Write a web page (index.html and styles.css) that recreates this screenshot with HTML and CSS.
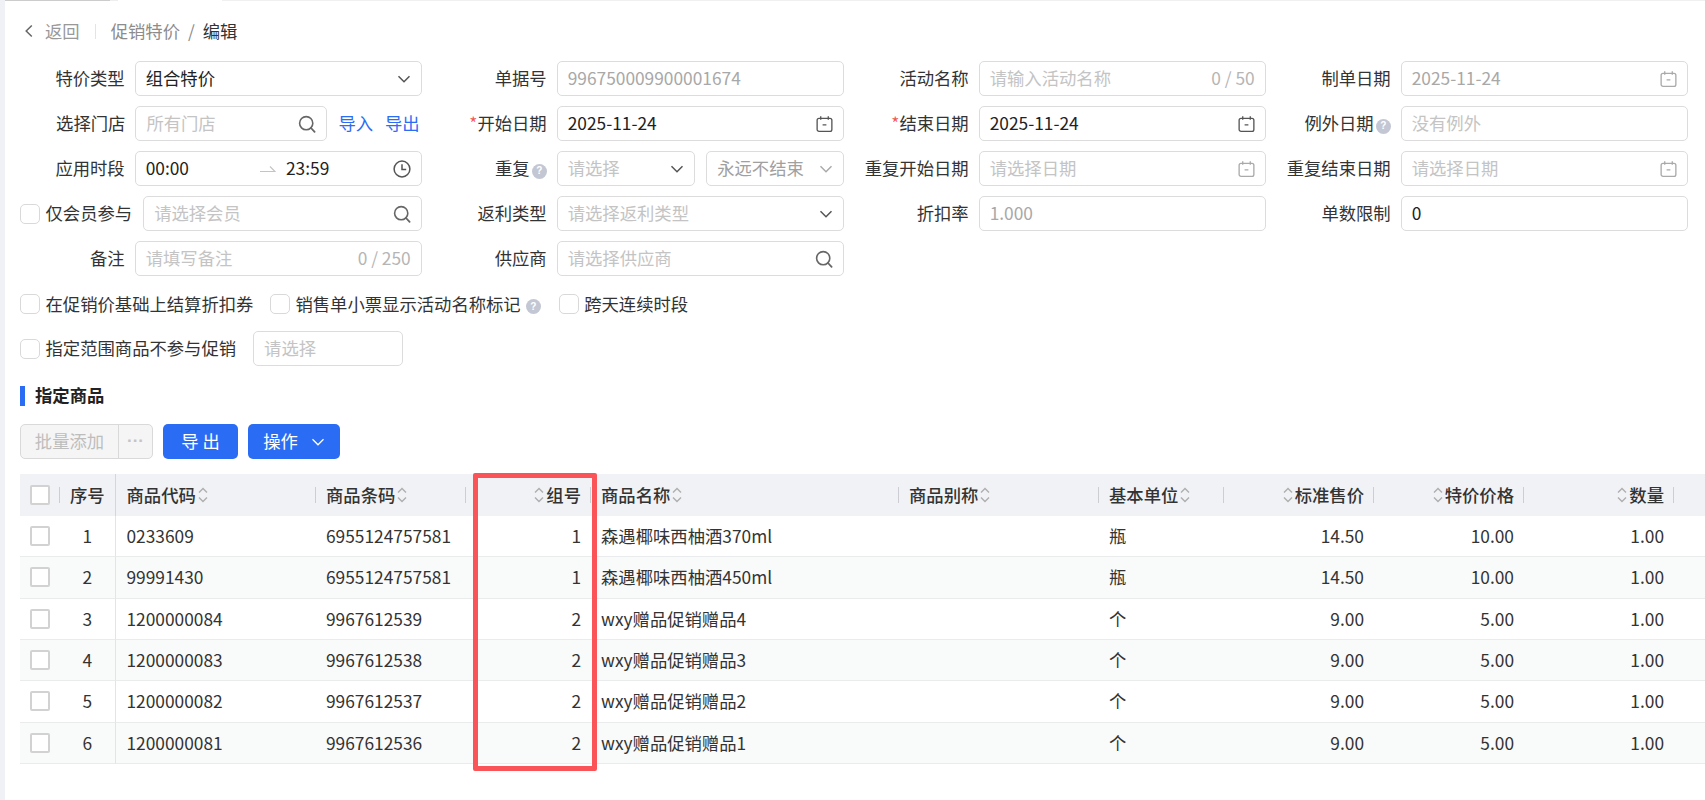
FILE: index.html
```html
<!DOCTYPE html>
<html lang="zh-CN">
<head>
<meta charset="utf-8">
<title>促销特价 / 编辑</title>
<link rel="stylesheet" href="styles.css">
</head>
<body>
<svg class="defs" width="0" height="0" aria-hidden="true">
  <defs>
    <symbol id="i-down" viewBox="0 0 14 14"><path d="M1.5 4.2 7 9.8l5.5-5.6" fill="none" stroke="currentColor" stroke-width="1.5"/></symbol>
    <symbol id="i-search" viewBox="0 0 18 18"><circle cx="8.2" cy="8.2" r="6.6" fill="none" stroke="currentColor" stroke-width="1.6"/><path d="m13 13 3.6 3.8" fill="none" stroke="currentColor" stroke-width="1.8" stroke-linecap="round"/></symbol>
    <symbol id="i-cal" viewBox="0 0 18 18"><rect x="1.2" y="3" width="15.6" height="13.8" rx="2" fill="none" stroke="currentColor" stroke-width="1.4"/><path d="M5 .8v3.6M13 .8v3.6M7 10h4" fill="none" stroke="currentColor" stroke-width="1.4"/></symbol>
    <symbol id="i-clock" viewBox="0 0 18 18"><circle cx="9" cy="9" r="7.9" fill="none" stroke="currentColor" stroke-width="1.5"/><path d="M9 4.2V9.6h4.2" fill="none" stroke="currentColor" stroke-width="1.5"/></symbol>
    <symbol id="i-sort" viewBox="0 0 10 16"><path d="M1 5.4 5 1.4l4 4M1 10.6l4 4 4-4" fill="none" stroke="currentColor" stroke-width="1.4"/></symbol>
  </defs>
</svg>
<div class="shell">
  <div class="strip"></div>
  <main class="page">
    <div class="topline"></div>
    <nav class="crumbs">
      <svg class="back-icon" viewBox="0 0 10 14"><path d="M7.8 1.5 2.2 7l5.6 5.5" fill="none" stroke="currentColor" stroke-width="1.5"/></svg>
      <span class="crumb-back">返回</span>
      <span class="crumb-div"></span>
      <span class="crumb-link">促销特价</span>
      <span class="crumb-sep">/</span>
      <span class="crumb-cur">编辑</span>
    </nav>

    <section class="form-grid">
      <div class="field"><label class="lab">特价类型</label><div class="ctl"><span class="val">组合特价</span><svg class="ic ic-down"><use href="#i-down"/></svg></div></div>
      <div class="field"><label class="lab">单据号</label><div class="ctl"><span class="dis">996750009900001674</span></div></div>
      <div class="field"><label class="lab">活动名称</label><div class="ctl"><span class="ph">请输入活动名称</span><span class="count">0 / 50</span></div></div>
      <div class="field"><label class="lab">制单日期</label><div class="ctl"><span class="dis">2025-11-24</span><svg class="ic ic-cal light"><use href="#i-cal"/></svg></div></div>

      <div class="field"><label class="lab">选择门店</label><div class="ctl ctl-store"><span class="ph">所有门店</span><svg class="ic ic-search"><use href="#i-search"/></svg></div><a class="link link-a">导入</a><a class="link link-b">导出</a></div>
      <div class="field"><label class="lab"><em>*</em>开始日期</label><div class="ctl"><span class="val">2025-11-24</span><svg class="ic ic-cal"><use href="#i-cal"/></svg></div></div>
      <div class="field"><label class="lab"><em>*</em>结束日期</label><div class="ctl"><span class="val">2025-11-24</span><svg class="ic ic-cal"><use href="#i-cal"/></svg></div></div>
      <div class="field"><label class="lab">例外日期<i class="help">?</i></label><div class="ctl"><span class="ph">没有例外</span></div></div>

      <div class="field"><label class="lab">应用时段</label><div class="ctl ctl-time"><span class="val t-start">00:00</span><svg class="t-arrow" viewBox="0 0 16 8"><path d="M0 6.5h15L10 1.5" fill="none" stroke="currentColor" stroke-width="1.2"/></svg><span class="val t-end">23:59</span><svg class="ic ic-clock"><use href="#i-clock"/></svg></div></div>
      <div class="field"><label class="lab">重复<i class="help">?</i></label><div class="pair"><div class="ctl ctl-half"><span class="ph">请选择</span><svg class="ic ic-down"><use href="#i-down"/></svg></div><div class="ctl ctl-half"><span class="dis2">永远不结束</span><svg class="ic ic-down light"><use href="#i-down"/></svg></div></div></div>
      <div class="field"><label class="lab">重复开始日期</label><div class="ctl"><span class="ph">请选择日期</span><svg class="ic ic-cal light"><use href="#i-cal"/></svg></div></div>
      <div class="field"><label class="lab">重复结束日期</label><div class="ctl"><span class="ph">请选择日期</span><svg class="ic ic-cal light"><use href="#i-cal"/></svg></div></div>

      <div class="field"><span class="cb"></span><label class="lab-cb">仅会员参与</label><div class="ctl ctl-grow"><span class="ph">请选择会员</span><svg class="ic ic-search"><use href="#i-search"/></svg></div></div>
      <div class="field"><label class="lab">返利类型</label><div class="ctl"><span class="ph">请选择返利类型</span><svg class="ic ic-down"><use href="#i-down"/></svg></div></div>
      <div class="field"><label class="lab">折扣率</label><div class="ctl"><span class="dis">1.000</span></div></div>
      <div class="field"><label class="lab">单数限制</label><div class="ctl"><span class="val">0</span></div></div>

      <div class="field"><label class="lab">备注</label><div class="ctl"><span class="ph">请填写备注</span><span class="count">0 / 250</span></div></div>
      <div class="field"><label class="lab">供应商</label><div class="ctl"><span class="ph">请选择供应商</span><svg class="ic ic-search"><use href="#i-search"/></svg></div></div>
    </section>

    <div class="check-row">
      <span class="cb"></span><span class="lab-cb gap-a">在促销价基础上结算折扣券</span>
      <span class="cb"></span><span class="lab-cb">销售单小票显示活动名称标记<i class="help">?</i></span>
      <span class="cb cb-third"></span><span class="lab-cb">跨天连续时段</span>
    </div>
    <div class="check-row-2">
      <span class="cb"></span><span class="lab-cb">指定范围商品不参与促销</span>
      <div class="ctl ctl-scope"><span class="ph">请选择</span></div>
    </div>

    <h2 class="section-title">指定商品</h2>

    <div class="toolbar">
      <div class="btn-group"><span class="btn-dis">批量添加</span><span class="btn-more">···</span></div>
      <button class="btn btn-export">导 出</button>
      <button class="btn btn-action">操作<svg class="btn-chev" viewBox="0 0 14 14"><path d="M1.5 4.2 7 9.8l5.5-5.6" fill="none" stroke="currentColor" stroke-width="1.3"/></svg></button>
    </div>

    <div class="table-wrap">
      <table class="grid">
        <colgroup>
          <col class="c-check"><col class="c-no"><col class="c-code"><col class="c-bar"><col class="c-group"><col class="c-name"><col class="c-alias"><col class="c-unit"><col class="c-num"><col class="c-num"><col class="c-num"><col class="c-rest">
        </colgroup>
        <thead>
          <tr>
            <th class="div"><span class="tcb"></span></th>
            <th class="center sep">序号</th>
            <th class="div"><span class="th-in">商品代码<svg class="sort"><use href="#i-sort"/></svg></span></th>
            <th class="div"><span class="th-in">商品条码<svg class="sort"><use href="#i-sort"/></svg></span></th>
            <th class="div right"><span class="th-in"><svg class="sort"><use href="#i-sort"/></svg>组号</span></th>
            <th class="div"><span class="th-in">商品名称<svg class="sort"><use href="#i-sort"/></svg></span></th>
            <th class="div"><span class="th-in">商品别称<svg class="sort"><use href="#i-sort"/></svg></span></th>
            <th class="div"><span class="th-in">基本单位<svg class="sort"><use href="#i-sort"/></svg></span></th>
            <th class="div right"><span class="th-in"><svg class="sort"><use href="#i-sort"/></svg>标准售价</span></th>
            <th class="div right"><span class="th-in"><svg class="sort"><use href="#i-sort"/></svg>特价价格</span></th>
            <th class="div right"><span class="th-in"><svg class="sort"><use href="#i-sort"/></svg>数量</span></th>
            <th></th>
          </tr>
        </thead>
        <tbody>
          <tr><td><span class="tcb"></span></td><td class="center sep">1</td><td>0233609</td><td>6955124757581</td><td class="right">1</td><td>森遇椰味西柚酒370ml</td><td></td><td>瓶</td><td class="right">14.50</td><td class="right">10.00</td><td class="right">1.00</td><td></td></tr>
          <tr><td><span class="tcb"></span></td><td class="center sep">2</td><td>99991430</td><td>6955124757581</td><td class="right">1</td><td>森遇椰味西柚酒450ml</td><td></td><td>瓶</td><td class="right">14.50</td><td class="right">10.00</td><td class="right">1.00</td><td></td></tr>
          <tr><td><span class="tcb"></span></td><td class="center sep">3</td><td>1200000084</td><td>9967612539</td><td class="right">2</td><td>wxy赠品促销赠品4</td><td></td><td>个</td><td class="right">9.00</td><td class="right">5.00</td><td class="right">1.00</td><td></td></tr>
          <tr><td><span class="tcb"></span></td><td class="center sep">4</td><td>1200000083</td><td>9967612538</td><td class="right">2</td><td>wxy赠品促销赠品3</td><td></td><td>个</td><td class="right">9.00</td><td class="right">5.00</td><td class="right">1.00</td><td></td></tr>
          <tr><td><span class="tcb"></span></td><td class="center sep">5</td><td>1200000082</td><td>9967612537</td><td class="right">2</td><td>wxy赠品促销赠品2</td><td></td><td>个</td><td class="right">9.00</td><td class="right">5.00</td><td class="right">1.00</td><td></td></tr>
          <tr><td><span class="tcb"></span></td><td class="center sep">6</td><td>1200000081</td><td>9967612536</td><td class="right">2</td><td>wxy赠品促销赠品1</td><td></td><td>个</td><td class="right">9.00</td><td class="right">5.00</td><td class="right">1.00</td><td></td></tr>
        </tbody>
      </table>
      <div class="callout"></div>
    </div>
  </main>
</div>
</body>
</html>
```

FILE: styles.css
```css
* { box-sizing: border-box; }
html, body { margin: 0; height: 800px; overflow: hidden; background: #fff; }
body {
  font-family: "Noto Sans CJK SC", "Noto Sans", sans-serif;
  font-size: 17.33px;
  color: #333;
  line-height: 1.3;
}
.defs { position: absolute; }
.shell { display: flex; height: 800px; }
.strip { width: 5px; flex: none; background: #f0f1f5; }
.page { flex: 1; min-width: 0; padding-left: 15px; overflow: hidden; }
.topline {
  height: 1px; margin-left: -15px;
  background: linear-gradient(to right, #ccc 0 105px, #eee 105px 113px, #fff 113px 217px, #f0f0f0 217px);
}

/* breadcrumb */
.crumbs { display: flex; align-items: center; height: 60px; color: #8c8c8c; }
.back-icon { width: 10px; height: 14px; margin-left: 4px; color: #666; }
.crumb-back { margin-left: 11px; color: #999; }
.crumb-div { width: 1px; height: 15px; background: #e4e4e4; margin: 0 15px; }
.crumb-link { color: #8c8c8c; }
.crumb-sep { margin: 0 8px; }
.crumb-cur { color: #333; }

/* form */
.form-grid {
  display: grid;
  grid-template-columns: 401.7px repeat(3, 422px);
  grid-auto-rows: 35px;
  row-gap: 10px;
}
.field { display: flex; align-items: center; min-width: 0; }
.lab { flex: 1; text-align: right; margin-right: 10px; white-space: nowrap; }
.lab em { font-style: normal; color: #f5545a; }
.help {
  display: inline-flex; align-items: center; justify-content: center;
  width: 15px; height: 15px; margin-left: 2px;
  border-radius: 50%; background: #c3c7d3; color: #fff;
  font: 700 10px/1 "Liberation Sans", sans-serif; vertical-align: 1px;
}
.ctl {
  display: flex; align-items: center; justify-content: space-between;
  width: 287px; height: 35px; flex: none;
  padding: 0 10px;
  border: 1px solid #dcdcdc; border-radius: 5px; background: #fff;
  white-space: nowrap;
}
.val { color: #222; }
.ph { color: #c4c4c4; }
.dis { color: #a8a8a8; }
.dis2 { color: #a0a0a0; }
.count { color: #b5b5b5; }
.ic { flex: none; color: #555; }
.ic.light { color: #aaa; }
.ic-down { width: 14px; height: 14px; }
.ic-search { width: 18px; height: 18px; color: #666; }
.ic-cal { width: 17px; height: 18px; }
.ic-clock { width: 18px; height: 18px; }
.ctl-store { width: 192px; }
.link { color: #2b6cf5; flex: none; }
.link-a { margin-left: 11px; }
.link-b { margin-left: 12px; margin-right: 2px; }
.ctl-time { justify-content: flex-start; }
.t-arrow { width: 16px; height: 8px; margin-left: 71px; color: #c4c4c4; flex: none; }
.t-end { margin-left: 10px; }
.ctl-time .ic-clock { margin-left: auto; }
.pair { display: flex; gap: 11px; width: 287px; flex: none; }
.ctl-half { flex: 1; width: auto; min-width: 0; }
.ctl-half:first-child { flex: none; width: 138.5px; }
.cb {
  display: block; flex: none; width: 20px; height: 20px;
  border: 1px solid #d9d9d9; border-radius: 5px; background: #fff;
}
.lab-cb { margin-left: 5.5px; white-space: nowrap; }
.ctl-grow { flex: 1; width: auto; margin-left: 11px; }

/* checkbox rows */
.check-row { display: flex; align-items: center; height: 20px; margin-top: 18px; }
.gap-a { margin-right: 16.5px; }
.check-row .help { margin-left: 5px; }
.cb-third { margin-left: 18px; }
.check-row-2 { display: flex; align-items: center; height: 35px; margin-top: 17px; }
.ctl-scope { width: 150px; margin-left: 17px; }

/* section */
.section-title {
  margin: 20px 0 0;
  height: 20px;
  padding-left: 10px;
  border-left: 5px solid #2b6cf5;
  font-size: 17.33px; font-weight: 700; line-height: 18px; color: #222;
}
.toolbar { display: flex; align-items: center; height: 35px; margin-top: 18px; }
.btn-group {
  display: flex; width: 133px; height: 35px;
  border: 1px solid #d9d9d9; border-radius: 5px; background: #f5f5f5; color: #bdbdbd;
}
.btn-dis { display: flex; align-items: center; justify-content: center; flex: none; width: 98px; border-right: 1px solid #d9d9d9; }
.btn-more { flex: 1; text-align: center; font: 700 17px/32px "Liberation Sans", sans-serif; color: #c4c4c4; }
.btn {
  display: flex; align-items: center; justify-content: center;
  height: 35px; border: 0; border-radius: 5px; background: #2b6cf5; color: #fff;
  font: inherit; padding: 0;
}
.btn-export { width: 75px; margin-left: 10px; }
.btn-action { width: 92px; margin-left: 10px; }
.btn-chev { width: 14px; height: 14px; margin-left: 13px; }

/* table */
.table-wrap { position: relative; margin-top: 15px; }
.grid { width: 1685px; table-layout: fixed; border-collapse: separate; border-spacing: 0; }
.c-check { width: 40px; }
.c-no { width: 55.5px; }
.c-code { width: 200.5px; }
.c-bar { width: 150px; }
.c-group { width: 125px; }
.c-name { width: 308px; }
.c-alias { width: 200px; }
.c-unit { width: 125px; }
.c-num { width: 150px; }
.c-rest { width: 31px; }
th, td { padding: 0 10px; white-space: nowrap; text-align: left; }
th:nth-child(3), td:nth-child(3) { padding-left: 11px; }
th {
  position: relative; height: 42px;
  background: #f1f2f5; color: #333; font-weight: 500;
}
td { height: 41.33px; border-bottom: 1px solid #e9ebed; color: #333; }
tbody tr:nth-child(even) td { background: #f9fafa; }
th:first-child, td:first-child { padding-left: 10px; padding-right: 0; }
.center { text-align: center; padding: 0; }
.right { text-align: right; }
th.right .th-in { justify-content: flex-end; }
.th-in { display: flex; align-items: center; gap: 2px; }
.sort { width: 10px; height: 16px; color: #aeaeae; flex: none; }
.sep { border-right: 1px solid #e3e4e7; }
th.sep { border-right-color: #d4d6da; }
.div::after {
  content: ""; position: absolute; right: 0; top: 13px;
  width: 1px; height: 16px; background: #ccced3;
}
.tcb {
  display: block; width: 20px; height: 20px;
  border: 2px solid #d2d2d2; border-radius: 2px; background: #fff;
}
.callout {
  position: absolute; left: 452.6px; top: -1.5px;
  width: 124px; height: 298.5px;
  border: 5px solid #fb5458; border-radius: 2px;
  pointer-events: none;
}
```
